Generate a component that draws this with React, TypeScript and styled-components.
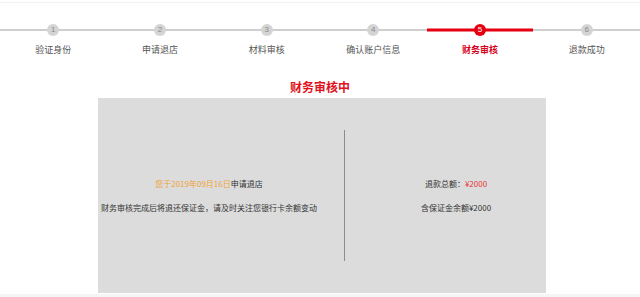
import React from "react";
import styled, { createGlobalStyle } from "styled-components";

const Global = createGlobalStyle`
  html, body { margin: 0; padding: 0; background: #fff; }
  body { font-family: "Microsoft YaHei", "Noto Sans CJK SC", "Liberation Sans", sans-serif; }
`;

const Page = styled.div`
  width: 640px;
  height: 297px;
  overflow: hidden;
  display: flex;
  flex-direction: column;
  padding-top: 2px;
  box-sizing: border-box;
`;

const TopRule = styled.div`
  height: 1px;
  background: #f3f3f3;
`;

const Steps = styled.div`
  display: grid;
  grid-template-columns: repeat(6, 1fr);
  padding-top: 21px;
`;

const Step = styled.div`
  display: flex;
  flex-direction: column;
  align-items: center;
`;

const Track = styled.div<{ $active?: boolean }>`
  position: relative;
  width: 100%;
  height: 12px;
  display: flex;
  justify-content: center;
  align-items: center;
  &::before {
    content: "";
    position: absolute;
    left: 0;
    right: 0;
    top: 50%;
    height: ${(p) => (p.$active ? 3 : 2)}px;
    transform: translateY(-50%);
    background: ${(p) => (p.$active ? "#e50011" : "#cfcfcf")};
  }
`;

const Dot = styled.span<{ $active?: boolean }>`
  position: relative;
  width: 12px;
  height: 12px;
  border-radius: 50%;
  background: ${(p) => (p.$active ? "#e50011" : "#d4d4d4")};
  color: ${(p) => (p.$active ? "#fff" : "#8a8a8a")};
  font-size: 8px;
  line-height: 12px;
  text-align: center;
  font-family: "Liberation Sans", sans-serif;
`;

const Label = styled.div<{ $active?: boolean }>`
  margin-top: 8px;
  font-size: 9px;
  line-height: 12px;
  color: ${(p) => (p.$active ? "#d9001b" : "#555")};
  font-weight: ${(p) => (p.$active ? 700 : 400)};
`;

const Title = styled.div`
  margin-top: 24px;
  text-align: center;
  font-size: 12px;
  line-height: 14px;
  font-weight: 700;
  color: #e0121c;
`;

const Panel = styled.div`
  margin: 4px 0 0 98px;
  width: 448px;
  height: 195px;
  background: #dcdcdc;
  display: flex;
  align-items: center;
`;

const Column = styled.div<{ $width: number }>`
  width: ${(p) => p.$width}px;
  display: flex;
  flex-direction: column;
  align-items: center;
  gap: 12px;
  font-size: 8px;
  line-height: 12px;
  color: #333;
  white-space: nowrap;
`;

const Divider = styled.div`
  width: 1px;
  height: 131px;
  background: #8c8c8c;
  margin: 0 21px 0 24px;
`;

const Orange = styled.span`
  color: #f0a236;
`;

const Red = styled.span`
  color: #e8333b;
`;

const Footer = styled.div`
  margin-top: 1px;
  flex: 1;
  background: #f5f5f5;
`;

const steps = ["验证身份", "申请退店", "材料审核", "确认账户信息", "财务审核", "退款成功"];
const ACTIVE = 4;

export default function App() {
  return (
    <>
      <Global />
      <Page>
        <TopRule />
        <Steps>
          {steps.map((s, i) => (
            <Step key={s}>
              <Track $active={i === ACTIVE}>
                <Dot $active={i === ACTIVE}>{i + 1}</Dot>
              </Track>
              <Label $active={i === ACTIVE}>{s}</Label>
            </Step>
          ))}
        </Steps>
        <Title>财务审核中</Title>
        <Panel>
          <Column $width={222}>
            <div>
              <Orange>您于2019年09月16日</Orange>申请退店
            </div>
            <div>财务审核完成后将退还保证金，请及时关注您银行卡余额变动</div>
          </Column>
          <Divider />
          <Column $width={180}>
            <div>
              退款总额：<Red>¥2000</Red>
            </div>
            <div>含保证金余额¥2000</div>
          </Column>
        </Panel>
        <Footer />
      </Page>
    </>
  );
}
